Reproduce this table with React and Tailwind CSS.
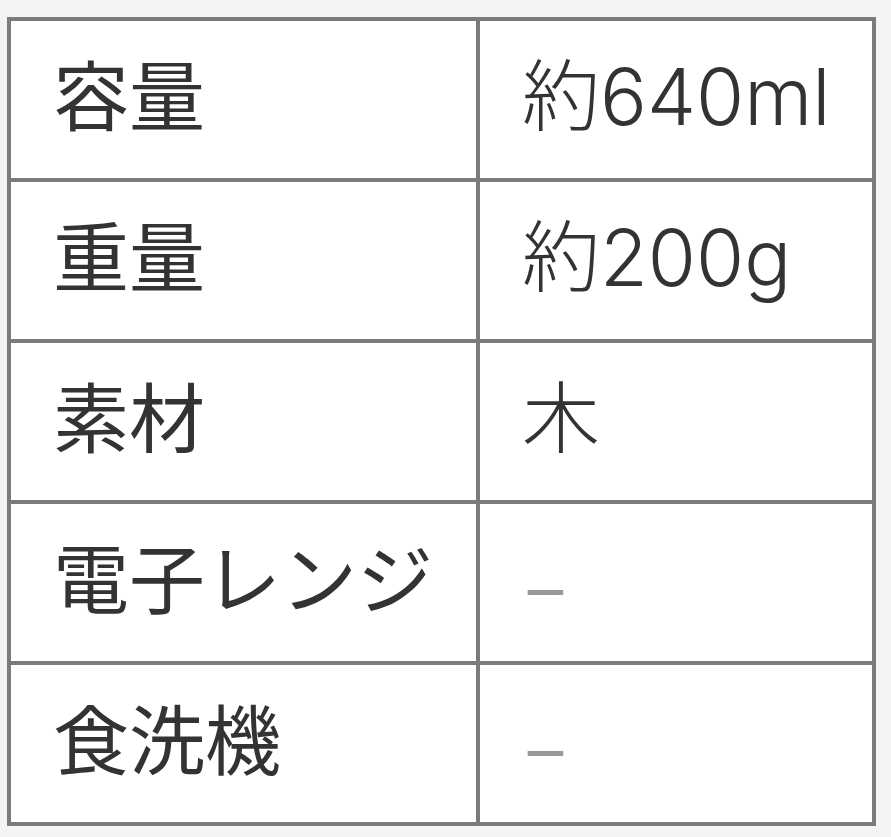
const specs = [
  { label: "容量", value: "約640ml" },
  { label: "重量", value: "約200g" },
  { label: "素材", value: "木" },
  { label: "電子レンジ", value: "–", muted: true },
  { label: "食洗機", value: "–", muted: true },
];

export default function App() {
  return (
    <div
      className="min-h-[837px] bg-[#f4f4f4] pt-[17px] pl-[7px]"
      style={{ fontFamily: 'Inter, "Noto Sans CJK JP", "Noto Sans", sans-serif' }}
    >
      <table className="w-[869px] table-fixed border-collapse border-4 border-[#7b7b7b] bg-white">
        <colgroup>
          <col className="w-[469px]" />
          <col />
        </colgroup>
        <tbody>
          {specs.map((row) => (
            <tr key={row.label} className="h-[161px]">
              <td className="border-4 border-[#7b7b7b] pl-[42px] pb-[6px] align-middle text-[76px] leading-none text-[#333]">
                {row.label}
              </td>
              {row.muted ? (
                <td className="border-4 border-[#7b7b7b] pl-[44px] pb-[6px] align-middle font-['Noto_Sans_CJK_JP'] text-[80px] leading-none text-[#999]">
                  {row.value}
                </td>
              ) : (
                <td className="border-4 border-[#7b7b7b] pl-[42px] pb-[6px] align-middle text-[78px] leading-none font-light text-[#333]">
                  {row.value}
                </td>
              )}
            </tr>
          ))}
        </tbody>
      </table>
    </div>
  );
}
